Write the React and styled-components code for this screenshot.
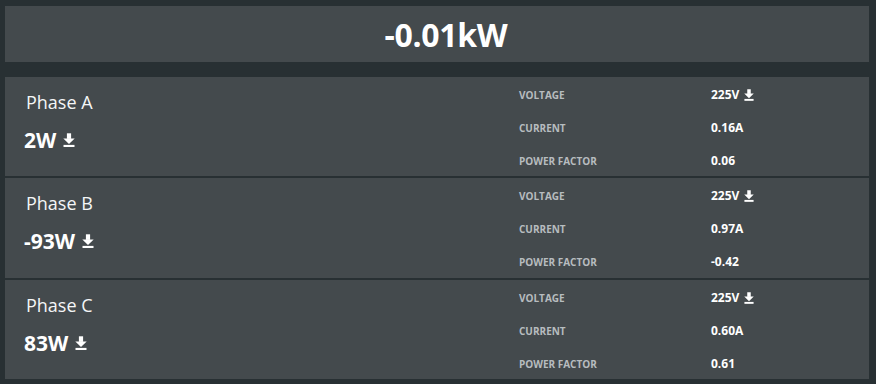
import React from 'react';
import styled, { createGlobalStyle } from 'styled-components';

const GlobalStyle = createGlobalStyle`
  html, body {
    margin: 0;
    padding: 0;
    background: #283033;
  }
  body {
    font-family: "Open Sans", "DejaVu Sans", sans-serif;
    color: #ffffff;
  }
`;

const Page = styled.div`
  padding: 6px 7px 6px 5px;
  display: flex;
  flex-direction: column;
  gap: 15px;
`;

const TotalPanel = styled.div`
  background: #444a4d;
  height: 56px;
  display: flex;
  align-items: center;
  justify-content: center;
  padding-left: 18px;
  font-size: 32px;
  font-weight: 700;
  letter-spacing: -0.3px;
`;

const PhaseList = styled.div`
  display: flex;
  flex-direction: column;
  gap: 2px;
`;

const PhaseRow = styled.div`
  background: #444a4d;
  height: ${({ $h }) => $h}px;
  display: grid;
  grid-template-columns: 504px 1fr;
`;

const PhaseInfo = styled.div`
  padding: 12px 20px 0 21px;
`;

const PhaseName = styled.div`
  font-size: 18px;
  line-height: 26px;
  color: #f4f6f7;
`;

const PhasePower = styled.div`
  margin-top: 10px;
  font-size: 21px;
  line-height: 30px;
  font-weight: 700;
  display: flex;
  align-items: center;
  gap: 7px;
  margin-left: -2px;
`;

const Stats = styled.div`
  padding: 1px 10px 0 10px;
  display: grid;
  grid-template-columns: 192px 1fr;
  grid-auto-rows: 33px;
  align-items: center;
`;

const Label = styled.div`
  font-size: 10px;
  font-weight: 700;
  color: #b7bcbf;
`;

const Value = styled.div`
  font-size: 12px;
  font-weight: 700;
  display: flex;
  align-items: center;
  gap: 5px;
`;

const DownloadIcon = ({ size = 12 }) => (
  <svg width={size} height={size * 1.2} viewBox="0 0 12 14.4" fill="#ffffff">
    <rect x="3.9" y="0.3" width="4.2" height="5.6" />
    <polygon points="0.3,5.4 11.7,5.4 6,11" />
    <rect x="0.5" y="11.9" width="11" height="2.3" />
  </svg>
);

const phases = [
  { name: 'Phase A', power: '2W', voltage: '225V', current: '0.16A', pf: '0.06', h: 99 },
  { name: 'Phase B', power: '-93W', voltage: '225V', current: '0.97A', pf: '-0.42', h: 100 },
  { name: 'Phase C', power: '83W', voltage: '225V', current: '0.60A', pf: '0.61', h: 99 },
];

export default function App() {
  return (
    <>
      <GlobalStyle />
      <Page>
        <TotalPanel>-0.01kW</TotalPanel>
        <PhaseList>
          {phases.map((p) => (
            <PhaseRow key={p.name} $h={p.h}>
              <PhaseInfo>
                <PhaseName>{p.name}</PhaseName>
                <PhasePower>
                  {p.power}
                  <DownloadIcon size={12} />
                </PhasePower>
              </PhaseInfo>
              <Stats>
                <Label>VOLTAGE</Label>
                <Value>
                  {p.voltage}
                  <DownloadIcon size={10} />
                </Value>
                <Label>CURRENT</Label>
                <Value>{p.current}</Value>
                <Label>POWER FACTOR</Label>
                <Value>{p.pf}</Value>
              </Stats>
            </PhaseRow>
          ))}
        </PhaseList>
      </Page>
    </>
  );
}
